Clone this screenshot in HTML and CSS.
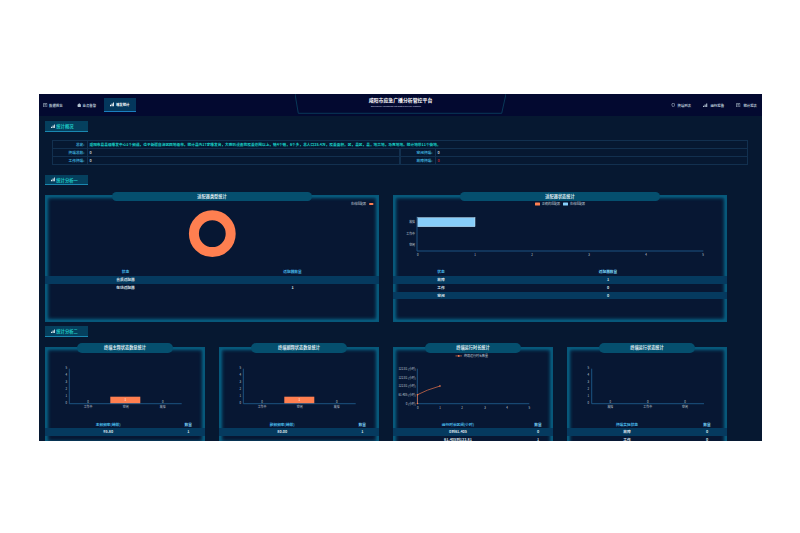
FILE: index.html
```html
<!DOCTYPE html>
<html lang="zh-CN">
<head>
    <meta charset="UTF-8">
    <title>应急广播分析管控平台</title>
    <link rel="stylesheet" href="styles.css">
</head>
<body>
    <svg class="defs" width="0" height="0">
        <symbol id="bars" viewBox="0 0 10 10"><path d="M0 10V6h2.500v4zM3.500 10V3.500H6V10zM7 10V1h3v9z" fill="currentColor"/></symbol>
        <symbol id="doc" viewBox="0 0 10 10"><path d="M1 1h8v8H1zM3 3.500h4M3 6.500h4" fill="none" stroke="currentColor" stroke-width="1.300"/></symbol>
        <symbol id="house" viewBox="0 0 10 10"><path d="M5 .5 10 5H8.500v4.500h-7V5H0z" fill="currentColor"/></symbol>
        <symbol id="pin" viewBox="0 0 10 10"><path d="M5 .5a3 3 0 0 1 3 3C8 6 5 9.500 5 9.500S2 6 2 3.500a3 3 0 0 1 3-3z" fill="none" stroke="currentColor" stroke-width="1.400"/></symbol>
    </svg>
    <div class="app">
        <header class="topbar">
            <nav class="nav">
                <a class="nav-item"><svg class="ico"><use href="#doc"/></svg>数据概览</a>
                <a class="nav-item"><svg class="ico"><use href="#house"/></svg>业务告警</a>
                <a class="nav-item active"><svg class="ico"><use href="#bars"/></svg>播发统计</a>
            </nav>
            <div class="brand">
                <svg class="brand-frame" viewBox="0 0 211 20" width="211" height="20"><path d="M0 0 3.300 19.300H206.700L211 0" fill="#030930" stroke="#0b4563" stroke-width=".8"/></svg>
                <h1>咸阳市应急广播分析管控平台</h1>
                <p>Emergency broadcast integrated service platform</p>
            </div>
            <nav class="nav nav-right">
                <a class="nav-item"><svg class="ico"><use href="#pin"/></svg>终端列表</a>
                <a class="nav-item"><svg class="ico"><use href="#bars"/></svg>运行报告</a>
                <a class="nav-item"><svg class="ico"><use href="#doc"/></svg>统计报表</a>
            </nav>
        </header>

        <main class="main">
            <h2 class="tab"><svg class="ico"><use href="#bars"/></svg>统计概况</h2>
            <div class="overview">
                <div class="ov-label">总览:</div>
                <div class="ov-text">咸阳市县县级播发中心1个频道，位于新疆自治区四地级市，统计县内17家播发台，大喇叭设备的覆盖范围以上，镇4个镇，6个乡，总人口25.4万，覆盖面积，区，县区，县，地声地，马克地地，统计地带11个街地。</div>
                <div class="ov-label">终端总数:</div>
                <div class="ov-val">0</div>
                <div class="ov-label">空闲终端:</div>
                <div class="ov-val">0</div>
                <div class="ov-label">工作终端:</div>
                <div class="ov-val">0</div>
                <div class="ov-label">故障终端:</div>
                <div class="ov-val danger">0</div>
            </div>

            <h2 class="tab tab-two"><svg class="ico"><use href="#bars"/></svg>统计分析一</h2>
            <div class="row-big">
                <section class="panel panel-big">
                    <h3 class="pill">适配器类型统计</h3>
                    <svg class="chart" width="334" height="67" viewBox="0 0 334 67">
                        <text class="legend" x="306" y="4">在线适配器</text>
                        <rect x="324" y="2" width="4.500" height="2" rx="1" fill="#ff7f50"/>
                        <circle cx="167.300" cy="32.700" r="18.400" fill="none" stroke="#ff7f50" stroke-width="10"/>
                    </svg>
                    <div class="data cols-a">
                        <div class="data-head"><span>状态</span><span>适配器数量</span></div>
                        <div class="data-row"><span>音质适配器</span><span></span></div>
                        <div class="data-row"><span>在线适配器</span><span>1</span></div>
                    </div>
                </section>
                <section class="panel panel-big">
                    <h3 class="pill">适配器状态统计</h3>
                    <svg class="chart" width="334" height="67" viewBox="0 0 334 67">
                        <rect x="142" y="1.500" width="5" height="3" rx=".5" fill="#ff7f50"/>
                        <text class="legend" x="149" y="4">正确的适配器</text>
                        <rect x="170" y="1.500" width="5" height="3" rx=".5" fill="#87cefa"/>
                        <text class="legend" x="177" y="4">在线适配器</text>
                        <rect x="24.700" y="16.700" width="57.300" height="9" fill="#87cefa" stroke="#cbe9fb" stroke-width=".5"/>
                        <path class="axis" d="M24 15.700V50H310.300"/>
                        <g class="tick end">
                            <text x="22" y="22.300">故障</text>
                            <text x="22" y="33.700">工作中</text>
                            <text x="22" y="45.300">空闲</text>
                        </g>
                        <g class="tick mid">
                            <text x="24.700" y="54.600">0</text>
                            <text x="82" y="54.600">1</text>
                            <text x="139" y="54.600">2</text>
                            <text x="196" y="54.600">3</text>
                            <text x="253" y="54.600">4</text>
                            <text x="310" y="54.600">5</text>
                        </g>
                    </svg>
                    <div class="data cols-b">
                        <div class="data-head"><span>状态</span><span class="hot">适配器数量</span></div>
                        <div class="data-row"><span>故障</span><span>1</span></div>
                        <div class="data-row"><span>工作</span><span>0</span></div>
                        <div class="data-row"><span>空闲</span><span>0</span></div>
                    </div>
                </section>
            </div>

            <h2 class="tab tab-three"><svg class="ico"><use href="#bars"/></svg>统计分析二</h2>
            <div class="row-small">
                <section class="panel panel-short">
                    <h3 class="pill">终端主频状态数量统计</h3>
                    <svg class="chart" width="160" height="68" viewBox="0 0 160 68">
                        <rect x="65.300" y="43.700" width="30" height="7" fill="#ff7f50"/>
                        <text class="tick mid bar-num" x="80.300" y="48.400">1</text>
                        <path class="axis" d="M24.300 15.700V50.700H136.700"/>
                        <g class="tick end">
                            <text x="22" y="16.300">5</text><text x="22" y="23.300">4</text><text x="22" y="30.300">3</text>
                            <text x="22" y="37.300">2</text><text x="22" y="44.300">1</text><text x="22" y="51.300">0</text>
                        </g>
                        <g class="tick mid">
                            <text x="43" y="50">0</text><text x="117.700" y="50">0</text>
                            <text x="43" y="55.200">工作中</text><text x="80.700" y="55.200">空闲</text><text x="117.700" y="55.200">故障</text>
                        </g>
                    </svg>
                    <div class="data cols-c">
                        <div class="data-head"><span>主频频率(赫兹)</span><span class="hot">数量</span></div>
                        <div class="data-row"><span>95.80</span><span>1</span></div>
                    </div>
                </section>
                <section class="panel panel-short">
                    <h3 class="pill">终端副频状态数量统计</h3>
                    <svg class="chart" width="160" height="68" viewBox="0 0 160 68">
                        <rect x="65.300" y="43.700" width="30" height="7" fill="#ff7f50"/>
                        <text class="tick mid bar-num" x="80.300" y="48.400">1</text>
                        <path class="axis" d="M24.300 15.700V50.700H136.700"/>
                        <g class="tick end">
                            <text x="22" y="16.300">5</text><text x="22" y="23.300">4</text><text x="22" y="30.300">3</text>
                            <text x="22" y="37.300">2</text><text x="22" y="44.300">1</text><text x="22" y="51.300">0</text>
                        </g>
                        <g class="tick mid">
                            <text x="43" y="50">0</text><text x="117.700" y="50">0</text>
                            <text x="43" y="55.200">工作中</text><text x="80.700" y="55.200">空闲</text><text x="117.700" y="55.200">故障</text>
                        </g>
                    </svg>
                    <div class="data cols-c">
                        <div class="data-head"><span>副频频率(赫兹)</span><span class="hot">数量</span></div>
                        <div class="data-row"><span>80.00</span><span>1</span></div>
                    </div>
                </section>
                <section class="panel">
                    <h3 class="pill">终端运行时长统计</h3>
                    <svg class="chart" width="160" height="68" viewBox="0 0 160 68">
                        <path d="M62.500 2.900H69" stroke="#ff7f50" stroke-width=".6"/>
                        <circle cx="65.700" cy="2.900" r=".9" fill="#ff7f50"/>
                        <text class="legend" x="71" y="4">终端运行时长数量</text>
                        <path class="axis" d="M24.300 15.700V50.700H136.300"/>
                        <path d="M24.500 50.500V41.700Q33 37 47 33" fill="none" stroke="#e8734a" stroke-width=".7"/>
                        <circle cx="24.500" cy="50.500" r=".8" fill="#ff7f50"/>
                        <circle cx="24.500" cy="41.700" r=".8" fill="#ff7f50"/>
                        <circle cx="47" cy="33" r=".8" fill="#ff7f50"/>
                        <g class="tick end">
                            <text x="22.700" y="16.900">122.81 (小时)</text>
                            <text x="22.700" y="25.500">122.81 (小时)</text>
                            <text x="22.700" y="34.200">122.81 (小时)</text>
                            <text x="22.700" y="42.900">61.405 (小时)</text>
                            <text x="22.700" y="51.500">0 (小时)</text>
                        </g>
                        <g class="tick mid">
                            <text x="24.700" y="55.500">0</text><text x="47" y="55.500">1</text><text x="69" y="55.500">2</text>
                            <text x="92" y="55.500">3</text><text x="114" y="55.500">4</text><text x="136.300" y="55.500">5</text>
                        </g>
                    </svg>
                    <div class="data cols-d">
                        <div class="data-head"><span>运行时长区间(小时)</span><span class="hot">数量</span></div>
                        <div class="data-row"><span>0到61.405</span><span>0</span></div>
                        <div class="data-row"><span>61.405到122.81</span><span>1</span></div>
                    </div>
                </section>
                <section class="panel">
                    <h3 class="pill">终端运行状态统计</h3>
                    <svg class="chart" width="160" height="68" viewBox="0 0 160 68">
                        <path class="axis" d="M24.700 15.700V50.700H137"/>
                        <g class="tick end">
                            <text x="22" y="16.300">5</text><text x="22" y="23.300">4</text><text x="22" y="30.300">3</text>
                            <text x="22" y="37.300">2</text><text x="22" y="44.300">1</text><text x="22" y="51.300">0</text>
                        </g>
                        <g class="tick mid">
                            <text x="43.300" y="50">0</text><text x="80.700" y="50">0</text><text x="118" y="50">0</text>
                            <text x="43.300" y="55.200">故障</text><text x="80.700" y="55.200">工作中</text><text x="118" y="55.200">空闲</text>
                        </g>
                    </svg>
                    <div class="data cols-e">
                        <div class="data-head"><span>终端实际状态</span><span class="hot">数量</span></div>
                        <div class="data-row"><span>故障</span><span>0</span></div>
                        <div class="data-row"><span>工作</span><span>0</span></div>
                    </div>
                </section>
            </div>
        </main>
    </div>
</body>
</html>
```

FILE: styles.css
```css
*{
    box-sizing: border-box;
}
body{
    margin: 0;
    height: 533px;
    padding: 94px 38px 0 39px;
    background-color: #fff;
    font-family: "Noto Sans CJK SC", "Noto Sans", sans-serif;
    overflow: hidden;
}
.defs{
    position: absolute;
}
.app{
    height: 347px;
    background-color: #061831;
    overflow: hidden;
}
.ico{
    width: 4.5px;
    height: 4.5px;
    flex: none;
}

/* top bar */
.topbar{
    display: grid;
    grid-template-columns: 256px 211px 1fr;
    height: 21.5px;
    background-color: #030930;
}
.nav{
    display: flex;
    align-items: flex-start;
    padding: 4px 0 0 4px;
    gap: 14px;
}
.nav-right{
    justify-content: flex-end;
    padding-right: 5px;
    gap: 12.400px;
}
.nav-item{
    display: flex;
    align-items: center;
    gap: 1.500px;
    height: 14px;
    font-size: 3.400px;
    font-weight: 700;
    color: #b4c4d2;
}
.nav-right .nav-item{
    gap: 2.500px;
}
.nav-item.active{
    margin-left: -6.200px;
    padding: 0 6.400px 0 6px;
    background-color: #04375c;
    border-bottom: 1.300px solid #1b7fc0;
    color: #fff;
}
.brand{
    position: relative;
    text-align: center;
    color: #fff;
}
.brand-frame{
    position: absolute;
    left: 0;
    top: 0;
}
.brand h1{
    position: relative;
    margin: 2.500px 0 0;
    font-size: 4.900px;
    line-height: 6px;
    font-weight: 700;
}
.brand p{
    position: relative;
    margin: 2.200px 0 0;
    padding-right: 9px;
    font-family: "Liberation Sans", sans-serif;
    font-size: 2.300px;
    line-height: 3px;
    color: #d5dde6;
}

/* content */
.main{
    padding: 5.500px 0 0 6px;
    width: 688px;
}
.tab{
    display: flex;
    align-items: center;
    gap: 1.300px;
    width: 43px;
    height: 10.500px;
    margin: 0;
    padding-left: 5.500px;
    background-color: #05405e;
    border-bottom: 1px solid #1a87b0;
    font-size: 4.300px;
    font-weight: 700;
    color: #1fc9c5;
}
.tab .ico{
    color: #dfe9ee;
}
.tab-two{
    margin-top: 10px;
}
.tab-three{
    margin-top: 4.300px;
}

.overview{
    display: grid;
    grid-template-columns: 35.500px 312.500px 35.500px 312.500px;
    margin: 8px 0 0 7px;
    width: 696px;
    border-top: .8px solid #12304f;
    font-size: 3.700px;
    font-weight: 700;
    line-height: 7.300px;
}
.overview > div{
    height: 8.100px;
    border-bottom: .8px solid #12304f;
    border-right: .8px solid #12304f;
    white-space: nowrap;
}
.ov-label{
    padding-right: 2px;
    text-align: right;
    color: #3aa3d0;
    border-left: .8px solid #12304f;
}
.ov-val{
    padding-left: 2px;
    color: #b5c4d0;
}
.ov-val.danger{
    color: #b0202c;
}
.overview .ov-text{
    grid-column: span 3;
    padding-left: 2px;
    color: #18d2c8;
}

/* panels */
.row-big,
.row-small{
    display: flex;
    align-items: flex-start;
    gap: 14px;
}
.row-big{
    margin-top: 10px;
}
.row-small{
    margin-top: 9.800px;
}
.panel{
    flex: none;
    width: 160px;
    height: 115px;
    background-color: #071733;
    box-shadow: inset 0 0 0 1.500px #07587a, inset 0 0 3.500px 3px #086488;
}
.panel-big{
    width: 334px;
    height: 126.700px;
}
.panel-short{
    height: 97px;
}
.pill{
    height: 9.700px;
    margin: -3.700px auto 0;
    width: 95.300px;
    border-radius: 5px;
    background-color: #054f6e;
    font-size: 4.200px;
    font-weight: 700;
    line-height: 9.700px;
    text-align: center;
    color: #dfeaf0;
}
.panel-big .pill{
    width: 200px;
}
.chart{
    display: block;
}
.legend{
    font-size: 3px;
    fill: #c6d2dc;
}
.axis{
    fill: none;
    stroke: #1f5a8a;
    stroke-width: .9;
}
.tick{
    font-size: 2.900px;
    fill: #c6d2dc;
}
.tick.end{
    text-anchor: end;
}
.tick.mid{
    text-anchor: middle;
}
.bar-num{
    fill: #fff;
}

/* tables in the panels */
.data{
    display: grid;
}
.data > div{
    display: grid;
    grid-column: 1 / -1;
    grid-template-columns: subgrid;
    height: 7.800px;
    font-size: 3.700px;
    font-weight: 700;
    line-height: 7.800px;
    text-align: center;
    color: #d6e0e8;
}
.data > .data-head{
    color: #47b9ea;
}
.data > .data-row:nth-child(even){
    background-color: #053a5f;
}
.hot{
    color: #7fdcff;
}
.cols-a{
    grid-template-columns: 161px 173px;
}
.cols-b{
    grid-template-columns: 96px 238px;
}
.cols-c{
    grid-template-columns: 126.500px 33.500px;
}
.cols-d{
    grid-template-columns: 130px 30px;
}
.cols-e{
    grid-template-columns: 120px 40px;
}
```
